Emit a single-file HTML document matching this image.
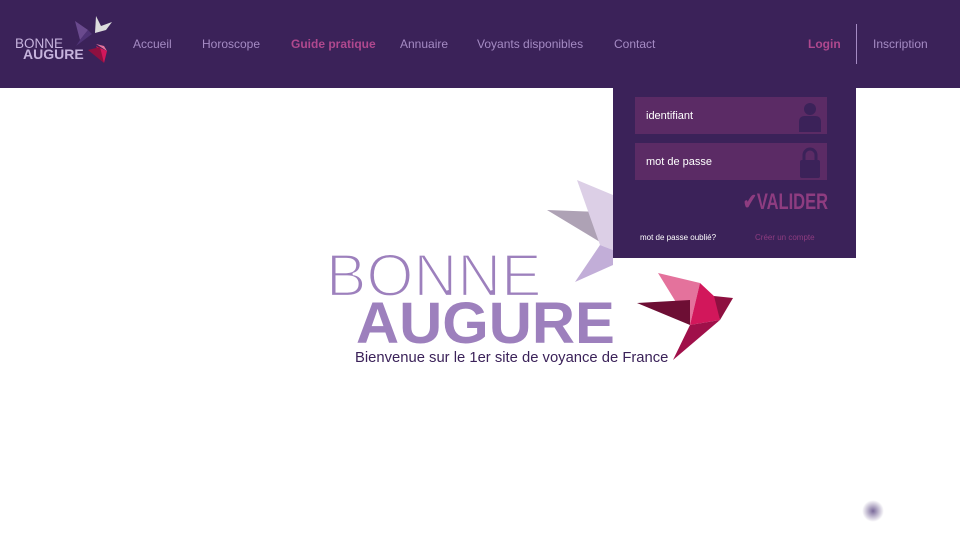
<!DOCTYPE html>
<html><head><meta charset="utf-8"><style>
*{margin:0;padding:0;box-sizing:border-box}
body{width:960px;height:544px;background:#fff;font-family:"Liberation Sans",sans-serif;position:relative;overflow:hidden}
.hd{position:absolute;left:0;top:0;width:960px;height:88px;background:#3b2259}
.nav{position:absolute;top:37px;font-size:12px;color:#a58bc4;white-space:nowrap}
.t{position:absolute;white-space:nowrap}
.dd{position:absolute;left:613px;top:88px;width:243px;height:170px;background:#3b2259}
.in{position:absolute;left:22px;width:192px;height:37px;background:#5b2b65;color:#fff;font-size:11px;padding:13px 0 0 11px}
</style></head><body>
<svg width="960" height="544" style="position:absolute;left:0;top:0">
<polygon points="547,210 600,212 605,245" fill="#aea2b5"/>
<polygon points="577,180 613,195 613,250 600,245" fill="#dccfe6"/>
<polygon points="600,245 613,250 613,265 575,282" fill="#c2aed8"/>
<polygon points="658,273 700,283 690,325" fill="#e4729c"/>
<polygon points="637,303 690,325 690,300" fill="#6d0e34"/>
<polygon points="700,283 716,298 720,320 690,325" fill="#d2175b"/>
<polygon points="714,296 733,298 720,320" fill="#8e1040"/>
<polygon points="690,325 720,320 673,360" fill="#a0104a"/>
</svg>
<div class="hd">
<svg width="120" height="88" style="position:absolute;left:0;top:0">
<polygon points="75,21 88,30 80,40" fill="#6a4a8e"/>
<polygon points="80,40 88,30 92,34 76,46" fill="#4f3376"/>
<polygon points="96,16 101,26 112,22 106,30 95,33" fill="#ddd"/>
<polygon points="96,46 107,51 104,63" fill="#d2175b"/>
<polygon points="88,50 100,47 104,63" fill="#8e1040"/>
<polygon points="96,44 104,46 107,51" fill="#e4729c"/>
</svg>
<div class="t" style="left:15px;top:36px;font-size:13.5px;color:#c6b3dd">BONNE</div>
<div class="t" style="left:23px;top:46px;font-size:14px;font-weight:bold;color:#c6b3dd">AUGURE</div>
<div class="nav" style="left:133px">Accueil</div>
<div class="nav" style="left:202px">Horoscope</div>
<div class="nav" style="left:291px;color:#b0488e;font-weight:bold">Guide pratique</div>
<div class="nav" style="left:400px">Annuaire</div>
<div class="nav" style="left:477px">Voyants disponibles</div>
<div class="nav" style="left:614px">Contact</div>
<div class="nav" style="left:808px;color:#b0488e;font-weight:bold">Login</div>
<div style="position:absolute;left:856px;top:24px;width:1px;height:40px;background:#a58bc4"></div>
<div class="nav" style="left:873px">Inscription</div>
</div>
<div class="dd">
<div class="in" style="top:9px">identifiant
<svg width="24" height="32" style="position:absolute;right:5px;top:3px"><circle cx="12" cy="9" r="6" fill="#3b2259"/><path d="M1 32 V22 Q1 16 7 16 H17 Q23 16 23 22 V32Z" fill="#3b2259"/></svg></div>
<div class="in" style="top:55px">mot de passe
<svg width="24" height="32" style="position:absolute;right:5px;top:3px"><path d="M6 14 V9 A6 6 0 0 1 18 9 V14" stroke="#3b2259" stroke-width="3" fill="none"/><rect x="2" y="14" width="20" height="18" rx="2" fill="#3b2259"/></svg></div>
<div class="t" style="left:130px;top:101px;font-size:22px;color:#8e3c80;font-weight:bold;transform:scaleX(.75);transform-origin:left">✔VALIDER</div>
<div class="t" style="left:27px;top:145px;font-size:8px;color:#fff">mot de passe oublié?</div>
<div class="t" style="left:142px;top:145px;font-size:8px;color:#8e3c80">Créer un compte</div>
</div>
<div class="t" style="left:326px;top:244px;font-size:60px;color:#9d80bd;line-height:64px;-webkit-text-stroke:2.2px #fff;transform:scaleX(1.01);transform-origin:left">BONNE</div>
<div class="t" style="left:356px;top:290px;font-size:58px;color:#9d80bd;font-weight:bold;line-height:68px;transform:scaleX(1.03);transform-origin:left">AUGURE</div>
<div class="t" style="left:355px;top:350px;font-size:14.8px;color:#3b2259">Bienvenue sur le 1er site de voyance de France</div>
<div style="position:absolute;left:862px;top:500px;width:22px;height:22px;border-radius:50%;background:radial-gradient(#7a6a9a,rgba(255,255,255,0) 70%)"></div>
</body></html>
